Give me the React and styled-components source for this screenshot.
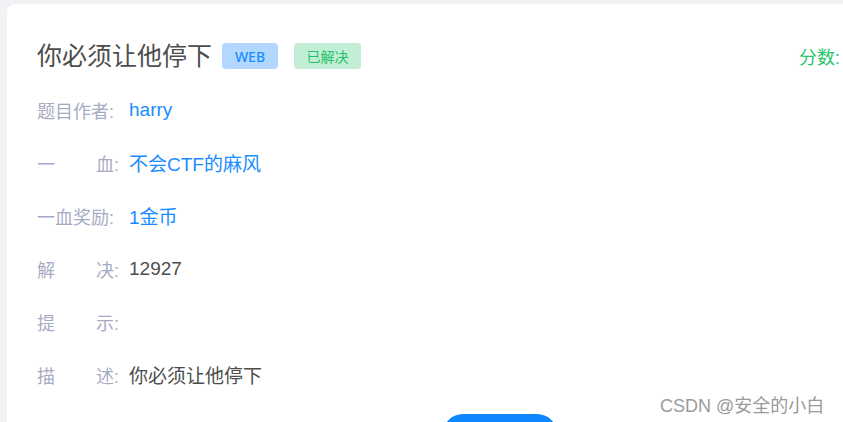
import React from "react";
import styled, { createGlobalStyle } from "styled-components";

const Global = createGlobalStyle`
  html, body { margin: 0; padding: 0; background: #f0f2f5; overflow: hidden; }
  body { font-family: "Liberation Sans", "Noto Sans CJK SC", sans-serif; }
`;

const Page = styled.div`
  position: relative;
  width: 843px;
  height: 422px;
  overflow: hidden;
  padding: 4px 0 0 7px;
  box-sizing: border-box;
`;

const Card = styled.div`
  width: 986px;
  background: #fff;
  border-radius: 8px;
  padding: 39px 30px 0 30px;
  box-sizing: border-box;
  height: 460px;
`;

const Header = styled.div`
  display: flex;
  align-items: center;
  height: 26px;
`;

const Title = styled.h1`
  margin: 0 10px 0 0;
  font-size: 25px;
  font-weight: 400;
  color: #4d4d4d;
  line-height: 26px;
`;

const Tag = styled.span`
  display: inline-flex;
  align-items: center;
  justify-content: center;
  height: 26px;
  width: ${(p) => p.$w}px;
  margin-right: 16px;
  border-radius: 4px;
  font-size: 14px;
  font-family: "Noto Sans", "Noto Sans CJK SC", sans-serif;
  font-weight: ${(p) => (p.$kind === "green" ? 400 : 500)};
  background: ${(p) => (p.$kind === "green" ? "#c2eed6" : "#b3d8ff")};
  color: ${(p) => (p.$kind === "green" ? "#23c26a" : "#1a8cff")};
`;

const Score = styled.span`
  margin-left: auto;
  margin-right: 78px;
  font-size: 18px;
  color: #27c36d;
`;

const Rows = styled.div`
  margin-top: 14px;
  display: flex;
  flex-direction: column;
`;

const Row = styled.div`
  display: flex;
  align-items: center;
  height: 53px;
  font-size: 18px;
`;

const Label = styled.span`
  display: flex;
  justify-content: space-between;
  width: 82px;
  margin-right: 10px;
  color: #a7acc4;
  white-space: nowrap;
`;

const Value = styled.span`
  font-size: 19px;
  color: ${(p) => (p.$link ? "#1a8cff" : "#4d4d4d")};
`;

const ButtonRow = styled.div`
  display: flex;
  justify-content: center;
  margin-top: 13px;
`;

const Button = styled.button`
  width: 114px;
  height: 40px;
  border: none;
  border-radius: 20px;
  background: #0e86fd;
  color: #fff;
  font-size: 16px;
  font-family: inherit;
`;

const Watermark = styled.div`
  position: absolute;
  left: 660px;
  top: 391px;
  font-size: 18px;
  color: #9a9a9a;
  text-shadow: 0 0 2px #fff, 0 0 1px #fff;
  white-space: nowrap;
`;

const rows = [
  { label: ["题目作者:"], value: "harry", link: true },
  { label: ["一", "血:"], value: "不会CTF的麻风", link: true },
  { label: ["一血奖励:"], value: "1金币", link: true },
  { label: ["解", "决:"], value: "12927" },
  { label: ["提", "示:"], value: "" },
  { label: ["描", "述:"], value: "你必须让他停下" },
];

export default function App() {
  return (
    <Page>
      <Global />
      <Card>
        <Header>
          <Title>你必须让他停下</Title>
          <Tag $w={56}>WEB</Tag>
          <Tag $w={67} $kind="green">已解决</Tag>
          <Score>分数: 1000</Score>
        </Header>
        <Rows>
          {rows.map((r) => (
            <Row key={r.label.join("")}>
              <Label>
                {r.label.map((part) => (
                  <span key={part}>{part}</span>
                ))}
              </Label>
              <Value $link={r.link}>{r.value}</Value>
            </Row>
          ))}
        </Rows>
        <ButtonRow>
          <Button>提交</Button>
        </ButtonRow>
      </Card>
      <Watermark>CSDN @安全的小白</Watermark>
    </Page>
  );
}
